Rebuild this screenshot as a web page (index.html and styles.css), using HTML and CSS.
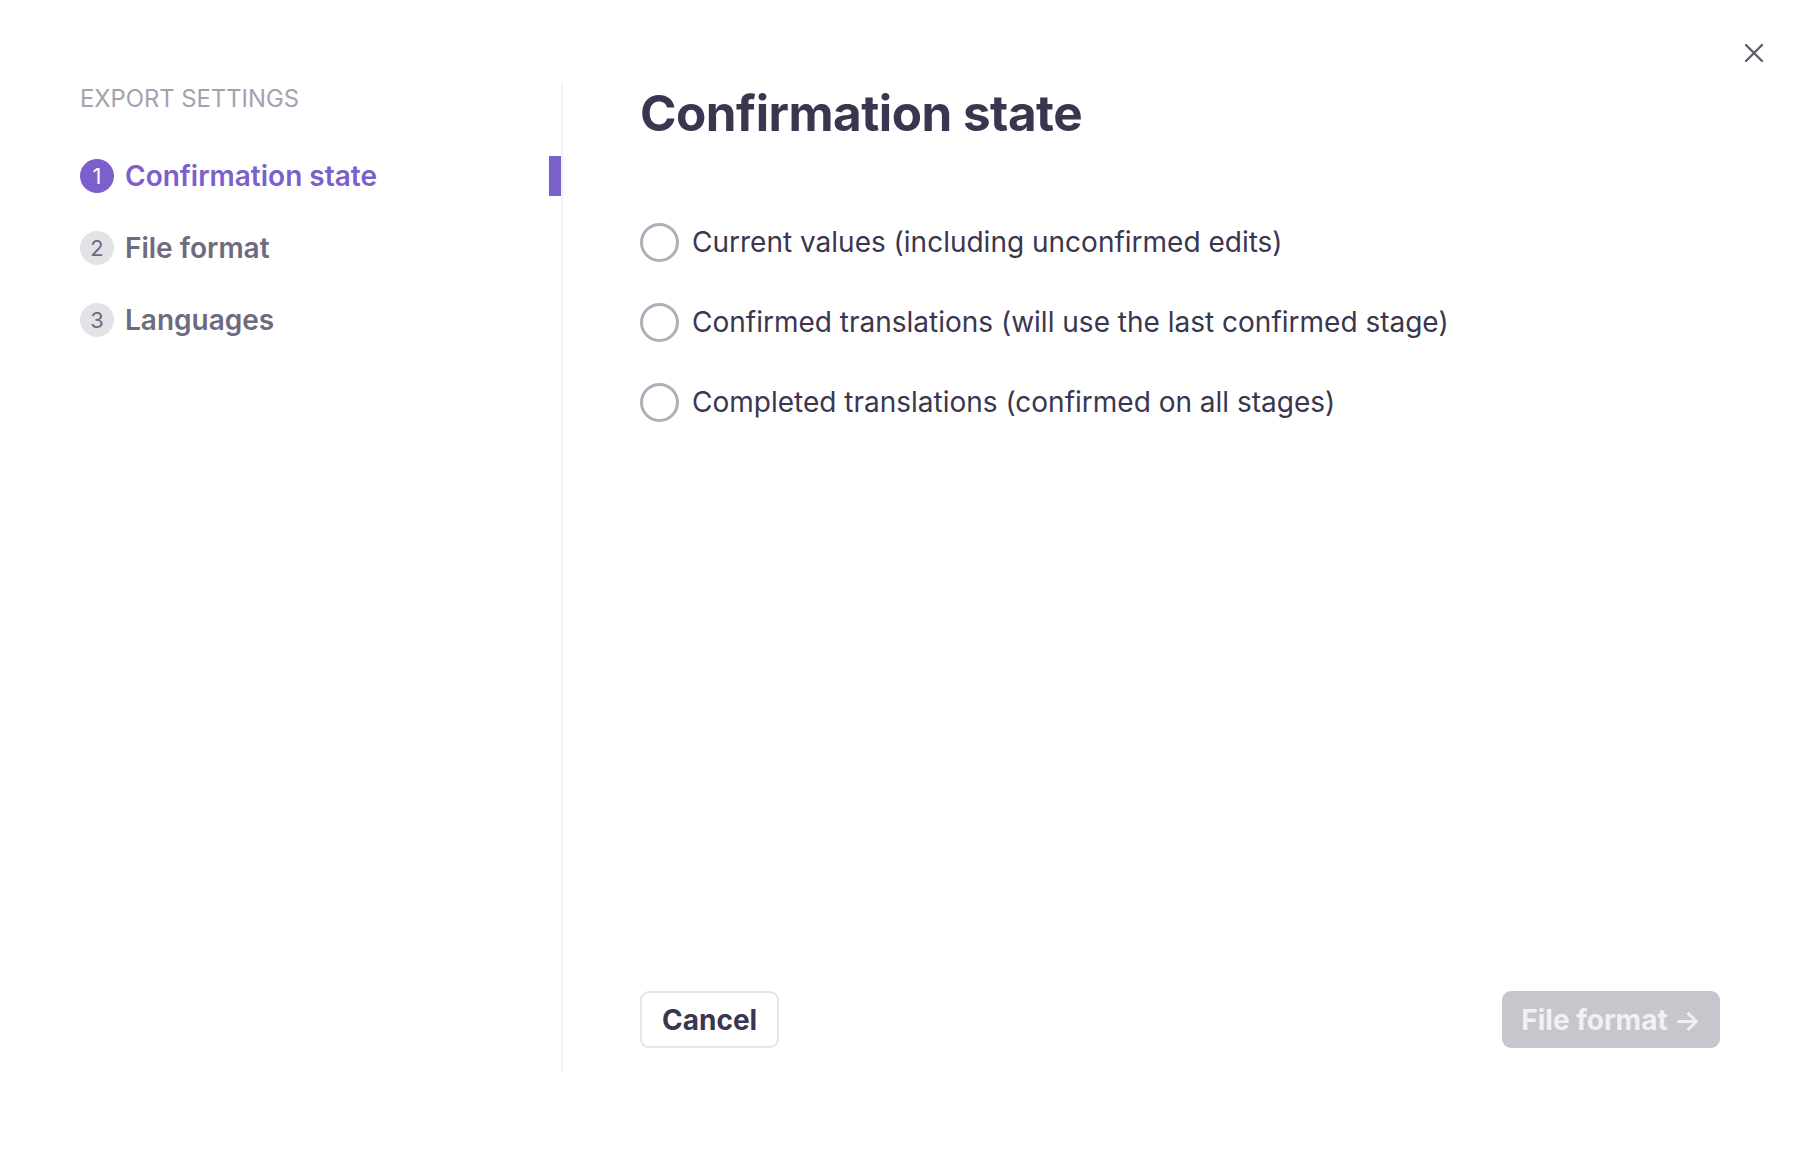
FILE: index.html
```html
<!DOCTYPE html>
<html lang="en">
<head>
  <meta charset="UTF-8">
  <title>Export settings</title>
  <link rel="stylesheet" href="styles.css">
</head>
<body>
  <div class="dialog">
    <button class="close" aria-label="Close">
      <svg width="20" height="20" viewBox="0 0 20 20">
        <path d="M2 2 L18 18 M18 2 L2 18" stroke="currentColor" stroke-width="2.4" stroke-linecap="round"/>
      </svg>
    </button>

    <!-- STEPS -->
    <aside class="steps">
      <div class="steps-title">EXPORT SETTINGS</div>
      <ol class="step-list">
        <li class="step active"><span class="num">1</span>Confirmation state</li>
        <li class="step"><span class="num">2</span>File format</li>
        <li class="step"><span class="num">3</span>Languages</li>
      </ol>
    </aside>

    <!-- PANEL -->
    <main class="panel">
      <h1>Confirmation state</h1>
      <div class="options">
        <label class="option"><span class="radio"></span>Current values (including unconfirmed edits)</label>
        <label class="option"><span class="radio"></span>Confirmed translations (will use the last confirmed stage)</label>
        <label class="option"><span class="radio"></span>Completed translations (confirmed on all stages)</label>
      </div>
      <div class="footer">
        <button class="btn cancel">Cancel</button>
        <button class="btn next" disabled>File format <span class="arrow">&rarr;</span></button>
      </div>
    </main>
  </div>
</body>
</html>
```

FILE: styles.css
```css
* {
  margin: 0;
  padding: 0;
  box-sizing: border-box;
}
body {
  background: #fff;
  font-family: Inter, "Noto Sans", sans-serif;
  color: #3b3650;
}

.dialog {
  position: relative;
  display: flex;
  height: 989px;
  margin-top: 83px;
  padding-left: 80px;
}

.close {
  position: absolute;
  top: -40px;
  right: 38px;
  width: 20px;
  height: 20px;
  border: 0;
  background: none;
  color: #5f5c72;
  cursor: pointer;
}
.close svg { display: block; }

/* STEPS */
.steps {
  width: 483px;
  border-right: 2px solid #f1f1f3;
}
.steps-title {
  font-size: 23.8px;
  line-height: 32px;
  color: #a4a2ae;
}
.step-list {
  list-style: none;
  margin-top: 41px;
  display: flex;
  flex-direction: column;
  gap: 32px;
}
.step {
  position: relative;
  display: flex;
  align-items: center;
  gap: 11px;
  height: 40px;
  font-size: 28px;
  font-weight: 600;
  color: #6e6a80;
}
.step .num {
  width: 34px;
  height: 34px;
  border-radius: 50%;
  background: #e3e2e7;
  color: #6e6a80;
  font-size: 22px;
  font-weight: 400;
  display: flex;
  align-items: center;
  justify-content: center;
}
.step.active { color: #7b5fcc; }
.step.active .num {
  background: #7b5fcc;
  color: #fff;
}
.step.active::after {
  content: "";
  position: absolute;
  right: 0;
  top: 0;
  width: 12px;
  height: 40px;
  background: #7b5fcc;
}

/* PANEL */
.panel {
  flex: 1;
  display: flex;
  flex-direction: column;
  padding: 0 82px 24px 77px;
}
.panel h1 {
  font-size: 49.4px;
  font-weight: 700;
  line-height: 60px;
  color: #3b3650;
  letter-spacing: -0.5px;
}
.options {
  margin-top: 80px;
  display: flex;
  flex-direction: column;
  gap: 41px;
}
.option {
  display: flex;
  align-items: center;
  gap: 13px;
  font-size: 28px;
  line-height: 39px;
  color: #3b3650;
}
.radio {
  flex: none;
  width: 39px;
  height: 39px;
  border: 3.5px solid #b0afb9;
  border-radius: 50%;
}

.footer {
  margin-top: auto;
  display: flex;
  justify-content: space-between;
}
.btn {
  height: 57px;
  border-radius: 9px;
  font-family: inherit;
  font-size: 28px;
  font-weight: 700;
  padding: 0 20px;
}
.btn.cancel {
  background: #fff;
  border: 2px solid #e6e6e8;
  color: #3b3650;
}
.btn.next {
  background: #c7c6cc;
  border: 0;
  color: #f1f1f4;
  padding: 0 19px;
}
.btn.next .arrow { font-weight: 600; }
```
